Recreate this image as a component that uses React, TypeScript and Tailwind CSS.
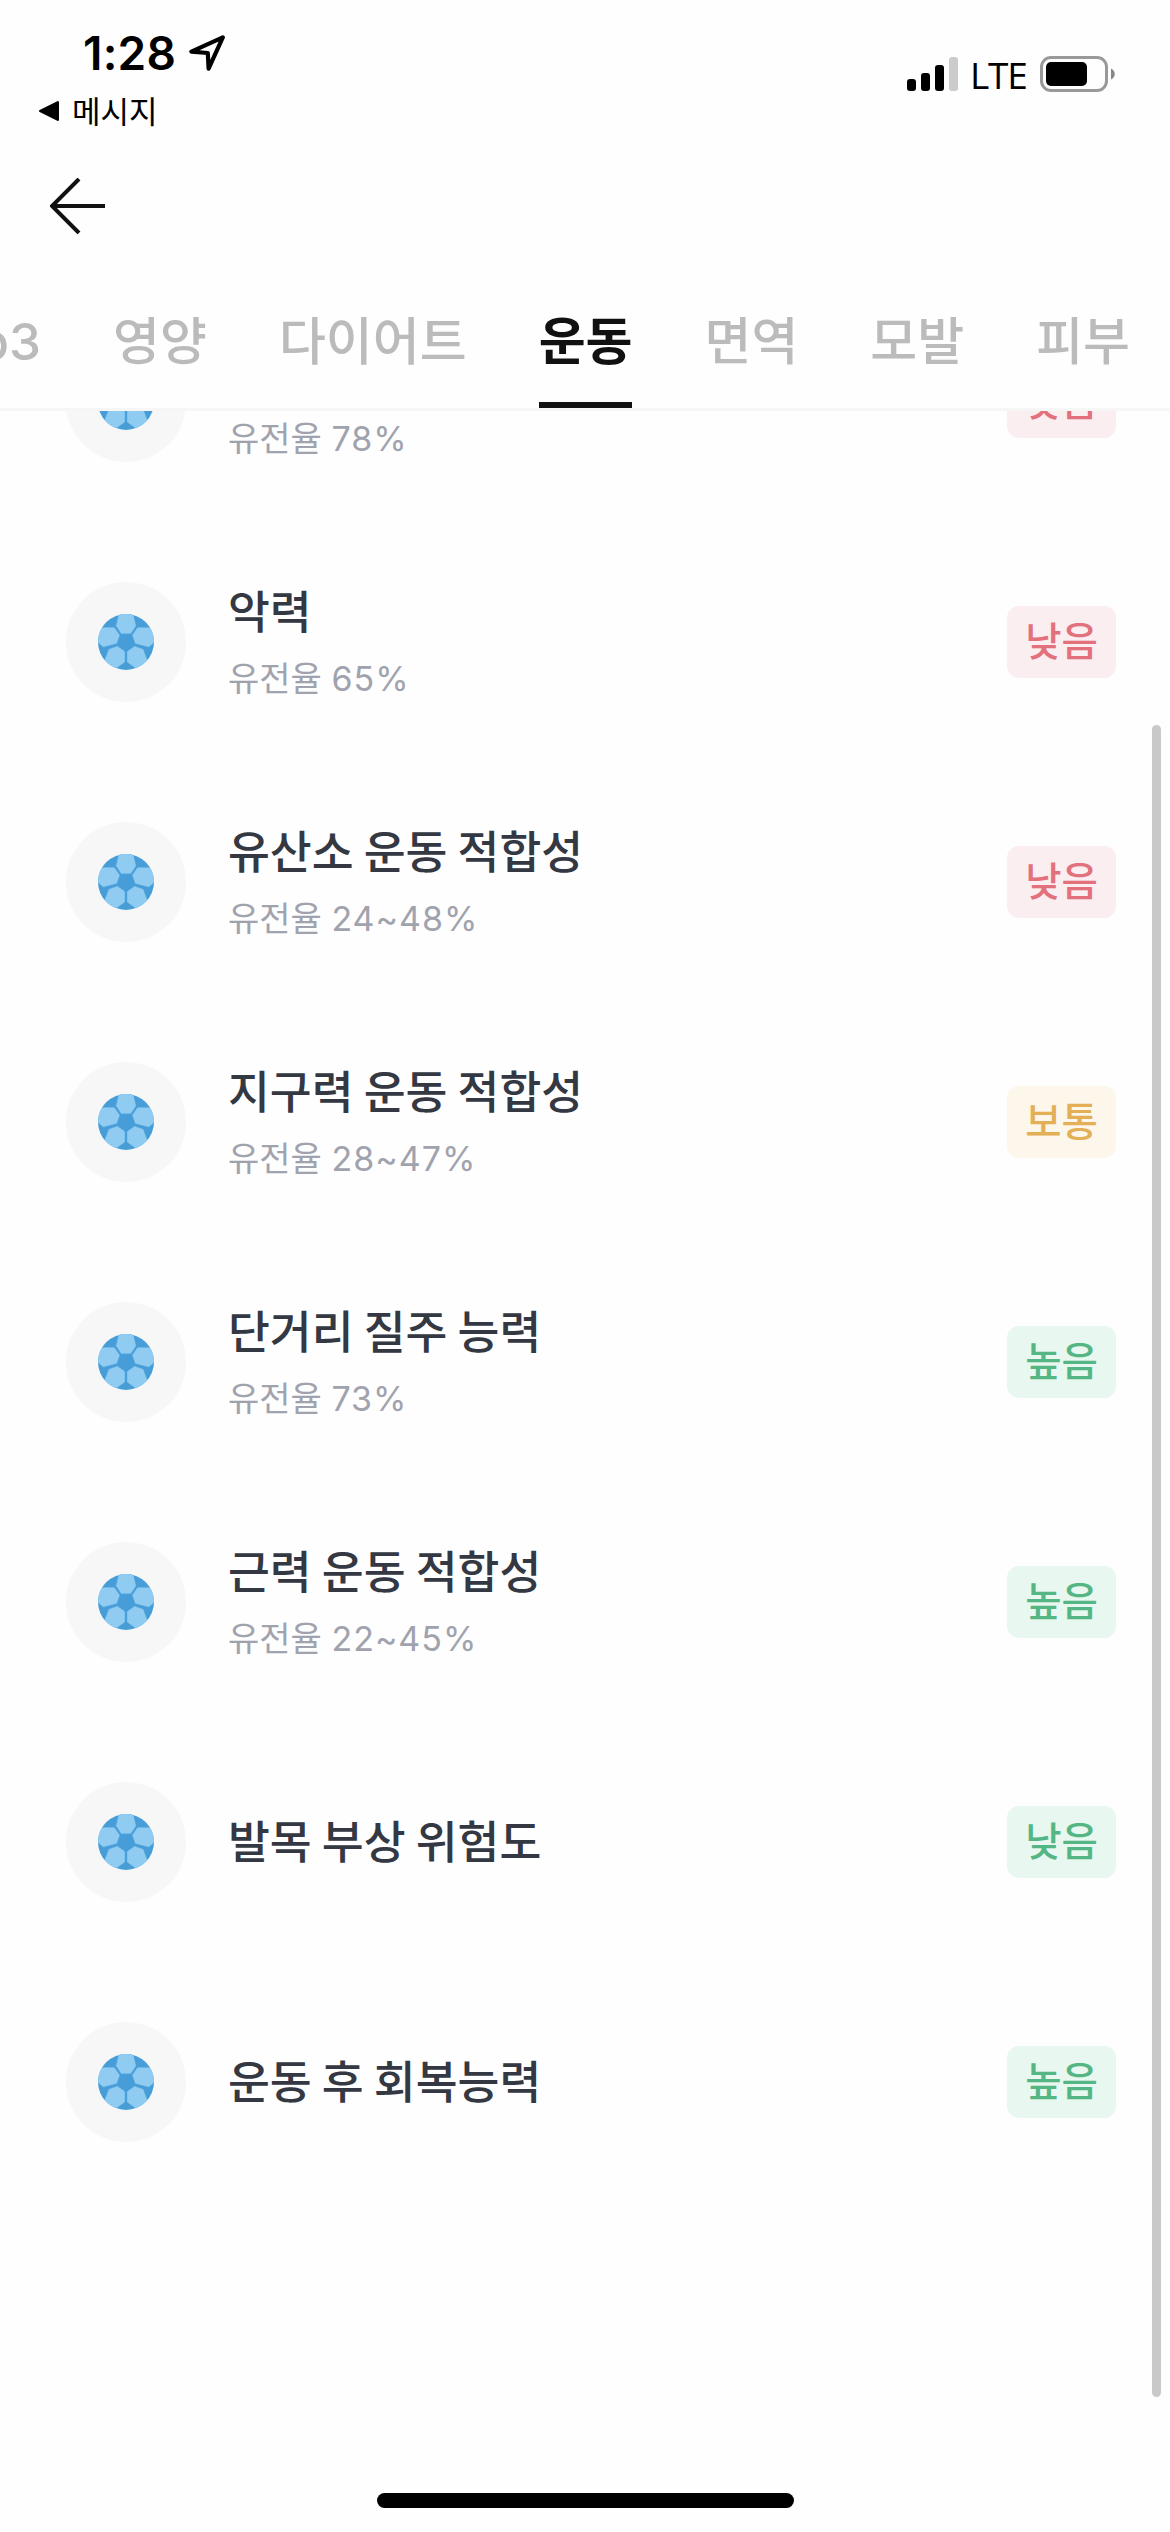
import React, { useState } from 'react';

type Level = 'red' | 'yellow' | 'green';

interface Item {
  id: number;
  title?: string;
  rate?: string;
  label: string;
  level: Level;
}

const tabs = ['Top3', '영양', '다이어트', '운동', '면역', '모발', '피부'];

const items: Item[] = [
  { id: 1, rate: '78%', label: '낮음', level: 'red' },
  { id: 2, title: '악력', rate: '65%', label: '낮음', level: 'red' },
  { id: 3, title: '유산소 운동 적합성', rate: '24~48%', label: '낮음', level: 'red' },
  { id: 4, title: '지구력 운동 적합성', rate: '28~47%', label: '보통', level: 'yellow' },
  { id: 5, title: '단거리 질주 능력', rate: '73%', label: '높음', level: 'green' },
  { id: 6, title: '근력 운동 적합성', rate: '22~45%', label: '높음', level: 'green' },
  { id: 7, title: '발목 부상 위험도', label: '낮음', level: 'green' },
  { id: 8, title: '운동 후 회복능력', label: '높음', level: 'green' },
];

const badgeStyles: Record<Level, string> = {
  red: 'bg-[#fbeef0] text-[#e2707d]',
  yellow: 'bg-[#fdf7eb] text-[#e4b057]',
  green: 'bg-[#e8f8f1] text-[#55b685]',
};

function BallIcon() {
  return (
    <svg viewBox="0 0 56 56" className="h-14 w-14">
      <defs>
        <clipPath id="ball">
          <circle cx="28" cy="28" r="28" />
        </clipPath>
      </defs>
      <g clipPath="url(#ball)">
        <rect width="56" height="56" fill="#479dd8" />
        <g fill="#90ccf1" stroke="#90ccf1" strokeWidth="0.6" strokeLinejoin="round">
          <path d="M21.5 -1 H34.5 L37.7 11.8 L32.8 19.3 H23.2 L18.3 11.8 Z" />
          <path d="M5.5 13.8 H16.2 L21.4 21 L18.6 29.3 L5.2 32.8 L-1 27 V18 Z" />
          <path d="M50.5 13.8 H39.8 L34.6 21 L37.4 29.3 L50.8 32.8 L57 27 V18 Z" />
          <path d="M11 35.4 L19.4 32.4 L26.6 37.6 V48 L18.5 53.8 L10 56 L4 50 L7.2 45.6 Z" />
          <path d="M45 35.4 L36.6 32.4 L29.4 37.6 V48 L37.5 53.8 L46 56 L52 50 L48.8 45.6 Z" />
        </g>
      </g>
    </svg>
  );
}

function StatusBar() {
  return (
    <div className="flex h-[147px] justify-between">
      <div className="flex flex-col pl-[38px] pt-[26px]">
        <div className="flex h-[54px] items-center pl-[45px]">
          <span className="w-[106px] text-[46px] font-semibold leading-none tracking-[0.2px] text-black">1:28</span>
          <svg viewBox="0 0 38 38" className="h-[38px] w-[38px]" fill="none" stroke="#000" strokeWidth="4.2" strokeLinejoin="round">
            <path d="M33.8 3.4 L2.4 17.6 L18.8 19 L19.6 34.6 Z" />
          </svg>
        </div>
        <div className="flex h-[62px] items-center">
          <svg viewBox="0 0 22 22" className="h-[22px] w-[22px]">
            <path d="M2.2 11 L19.8 2.2 V19.8 Z" stroke="#000" strokeWidth="2.4" strokeLinejoin="round" />
          </svg>
          <span className="ml-[12px] text-[31px] leading-none text-black">메시지</span>
        </div>
      </div>
      <div className="mt-[56px] flex h-[36px] items-center pr-[54px]">
        <div className="flex h-[34px] items-end gap-[5px]">
          <span className="h-[12px] w-[9px] rounded-[3px] bg-black" />
          <span className="h-[18px] w-[9px] rounded-[3px] bg-black" />
          <span className="h-[26px] w-[9px] rounded-[3px] bg-black" />
          <span className="h-[34px] w-[9px] rounded-[3px] bg-[#cbcbcb]" />
        </div>
        <span className="ml-[12px] w-[70px] font-['Open_Sans'] text-[37px] font-medium leading-none tracking-[-1.2px] text-black">LTE</span>
        <svg viewBox="0 0 76 36" className="h-[36px] w-[76px]">
          <rect x="1.5" y="1.5" width="65" height="33" rx="9.5" fill="none" stroke="#999" strokeWidth="3" />
          <rect x="6" y="6" width="41" height="24" rx="5" fill="#000" />
          <path d="M71 12.5 C76 15 76 21 71 23.5 Z" fill="#888" />
        </svg>
      </div>
    </div>
  );
}

export default function App() {
  const [activeTab, setActiveTab] = useState('운동');

  return (
    <div className="relative flex h-[2532px] w-[1170px] flex-col overflow-hidden bg-[#fefefe] font-['Inter','Noto_Sans_CJK_KR',sans-serif]">
      <StatusBar />

      {/* Header */}
      <header className="flex h-[118px] items-center pl-[50px]">
        <button type="button" aria-label="뒤로">
          <svg viewBox="0 0 56 56" className="h-14 w-14" fill="none" stroke="#111" strokeWidth="4">
            <path d="M55 28 H2 M29 1 L2 28 L29 55" />
          </svg>
        </button>
      </header>

      {/* Tabs */}
      <nav className="flex h-[146px] shrink-0 justify-end gap-[72px] border-b-[3px] border-[#f6f6f6] pr-[40px]">
        {tabs.map((tab) => (
          <button
            key={tab}
            type="button"
            onClick={() => setActiveTab(tab)}
            className={`shrink-0 whitespace-nowrap border-b-[6px] pt-[16px] text-[51px] leading-none ${
              tab === activeTab ? 'border-[#111] font-bold text-[#111]' : 'border-transparent font-medium text-[#bbb]'
            }`}
          >
            {tab}
          </button>
        ))}
      </nav>

      {/* Result list */}
      <main className="h-[1900px] overflow-hidden">
        <ul className="-mt-[129px]">
          {items.map((item) => (
            <li key={item.id} className="flex h-[240px] items-center pl-[66px] pr-[54px]">
              <div className="flex h-[120px] w-[120px] items-center justify-center rounded-full bg-[#f7f7f7]">
                <BallIcon />
              </div>
              <div className="ml-[42px] flex-1 pt-[2px]">
                <p className="h-[60px] text-[45.5px] font-medium leading-[60px] text-[#343842] [word-spacing:-2px]">{item.title}</p>
                {item.rate && (
                  <p className="mt-[12px] text-[34px] leading-[48px] text-[#a0a3ad]">
                    유전율 <span className="tracking-[1px]">{item.rate}</span>
                  </p>
                )}
              </div>
              <span className={`flex h-[72px] w-[109px] items-center justify-center rounded-[12px] pt-[2px] text-[39.5px] font-medium leading-none ${badgeStyles[item.level]}`}>
                {item.label}
              </span>
            </li>
          ))}
        </ul>
      </main>

      {/* Scroll indicator */}
      <div className="absolute right-[9px] top-[725px] h-[1672px] w-[9px] rounded-full bg-[#c9c9c9]" />

      {/* Home indicator */}
      <div className="mt-auto mb-[24px] h-[15px] w-[417px] shrink-0 self-center rounded-full bg-black" />
    </div>
  );
}
